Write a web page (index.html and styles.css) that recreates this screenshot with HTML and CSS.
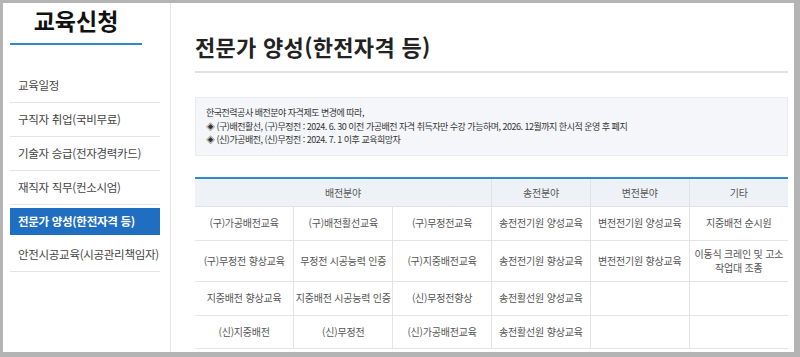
FILE: index.html
```html
<!DOCTYPE html>
<html lang="ko">
<head>
    <meta charset="UTF-8">
    <title>교육신청</title>
    <link rel="stylesheet" href="styles.css">
</head>
<body>
    <div class="frame">
        <div class="page">
            <!-- Left menu -->
            <aside class="sidebar">
                <h2 class="side-title">교육신청</h2>
                <ul class="side-menu">
                    <li>교육일정</li>
                    <li>구직자 취업(국비무료)</li>
                    <li>기술자 승급(전자경력카드)</li>
                    <li>재직자 직무(컨소시엄)</li>
                    <li class="active">전문가 양성(한전자격 등)</li>
                    <li>안전시공교육(시공관리책임자)</li>
                </ul>
            </aside>

            <!-- Main content -->
            <main class="content">
                <h1 class="page-title">전문가 양성(한전자격 등)</h1>

                <div class="notice">
                    <p>한국전력공사 배전분야 자격제도 변경에 따라,</p>
                    <p>◈ (구)배전활선, (구)무정전 : 2024. 6. 30 이전 가공배전 자격 취득자만 수강 가능하며, 2026. 12월까지 한시적 운영 후 폐지</p>
                    <p>◈ (신)가공배전, (신)무정전 : 2024. 7. 1 이후 교육희망자</p>
                </div>

                <table class="course-table">
                    <thead>
                        <tr>
                            <th colspan="3">배전분야</th>
                            <th>송전분야</th>
                            <th>변전분야</th>
                            <th>기타</th>
                        </tr>
                    </thead>
                    <tbody>
                        <tr class="r1">
                            <td>(구)가공배전교육</td>
                            <td>(구)배전활선교육</td>
                            <td>(구)무정전교육</td>
                            <td>송전전기원 양성교육</td>
                            <td>변전전기원 양성교육</td>
                            <td>지중배전 순시원</td>
                        </tr>
                        <tr class="r2">
                            <td>(구)무정전 향상교육</td>
                            <td>무정전 시공능력 인증</td>
                            <td>(구)지중배전교육</td>
                            <td>송전전기원 향상교육</td>
                            <td>변전전기원 향상교육</td>
                            <td>이동식 크레인 및 고소<br>작업대 조종</td>
                        </tr>
                        <tr class="r3">
                            <td>지중배전 향상교육</td>
                            <td>지중배전 시공능력 인증</td>
                            <td>(신)무정전향상</td>
                            <td>송전활선원 양성교육</td>
                            <td></td>
                            <td></td>
                        </tr>
                        <tr class="r4">
                            <td>(신)지중배전</td>
                            <td>(신)무정전</td>
                            <td>(신)가공배전교육</td>
                            <td>송전활선원 향상교육</td>
                            <td></td>
                            <td></td>
                        </tr>
                    </tbody>
                </table>
            </main>
        </div>
    </div>
</body>
</html>
```

FILE: styles.css
```css
body {
    margin: 0;
    font-family: "Noto Sans CJK KR", "Noto Sans", sans-serif;
    color: #333;
}

.frame {
    width: 800px;
    height: 357px;
    box-sizing: border-box;
    padding: 3px 6px 5px 3px;
    background-color: #b4b4b4;
}

.page {
    display: flex;
    height: 100%;
    background-color: #fff;
    overflow: hidden;
}

/* Sidebar */
.sidebar {
    width: 168px;
    flex-shrink: 0;
    border-right: 1px solid #e6e6e6;
    padding: 0 10px 0 7px;
    box-sizing: border-box;
}

.side-title {
    margin: 0;
    width: 132px;
    text-align: center;
    font-size: 23px;
    font-weight: bold;
    color: #111;
    line-height: 30px;
    padding-top: 2px;
    padding-bottom: 8px;
    border-bottom: 2px solid #2d8bc9;
}

.side-menu {
    list-style: none;
    margin: 24px 0 0;
    padding: 0;
}

.side-menu li {
    height: 33px;
    line-height: 33px;
    padding-left: 8px;
    font-size: 11.5px;
    letter-spacing: -0.3px;
    white-space: nowrap;
    color: #444;
    border-bottom: 1px solid #e4e4e4;
}

.side-menu li.active {
    background-color: #1f6ec2;
    color: #fff;
    font-weight: bold;
    height: 27px;
    line-height: 27px;
    margin: 3px 0;
    border-bottom: none;
}

/* Main */
.content {
    flex: 1;
    padding: 0 6px 0 24px;
}

.page-title {
    margin: 0;
    padding: 29px 0 11px;
    font-size: 22px;
    font-weight: bold;
    letter-spacing: 0.3px;
    color: #222;
    line-height: 28px;
    border-bottom: 2px solid #e2e2e2;
}

.notice {
    margin-top: 24px;
    background-color: #f4f6f9;
    border: 1px solid #e8ecf0;
    padding: 8px 10px 8px;
}

.notice p {
    margin: 0;
    font-size: 9px;
    letter-spacing: -0.5px;
    line-height: 13.5px;
    color: #333;
}

.course-table {
    margin-top: 21px;
    width: 100%;
    border-collapse: collapse;
    border-top: 2px solid #2d8bc9;
    table-layout: fixed;
    font-size: 10px;
    letter-spacing: -0.2px;
    color: #555;
}

.course-table th {
    background-color: #eef2f6;
    font-weight: normal;
    height: 27px;
    padding: 0;
    border: 1px solid #dfe3e8;
    border-top: none;
}

.course-table td {
    text-align: center;
    white-space: nowrap;
    border: 1px solid #e4e4e4;
    line-height: 14px;
    padding: 0;
}

.course-table th:first-child,
.course-table td:first-child {
    border-left: none;
}

.course-table th:last-child,
.course-table td:last-child {
    border-right: none;
}

.course-table tr.r1 td { height: 33px; }
.course-table tr.r2 td { height: 40px; }
.course-table tr.r3 td { height: 33px; }
.course-table tr.r4 td { height: 32px; }
```
